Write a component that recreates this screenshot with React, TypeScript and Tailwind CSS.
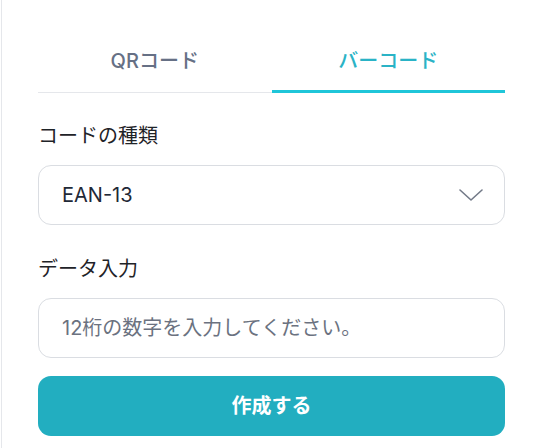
import { useState } from "react";

const font = { fontFamily: "Inter, 'Noto Sans CJK JP', sans-serif" };

export default function App() {
  const [tab, setTab] = useState<"qr" | "bar">("bar");

  return (
    <div className="min-h-screen bg-white pl-px" style={font}>
      <div className="min-h-screen border-l border-[#e5e7eb] px-[36px] pt-[30px]">
        <div className="grid grid-cols-2 border-b border-[#e5e7eb]">
          <button
            onClick={() => setTab("qr")}
            className={`-mb-px border-b-[3px] pt-[17px] pb-[15px] text-[20px] leading-[28px] font-medium ${
              tab === "qr" ? "border-[#1fc6d9] text-[#2ab3c6]" : "border-transparent text-[#667085]"
            }`}
          >
            QRコード
          </button>
          <button
            onClick={() => setTab("bar")}
            className={`-mb-px border-b-[3px] pt-[17px] pb-[15px] text-[20px] leading-[28px] font-medium ${
              tab === "bar" ? "border-[#1fc6d9] text-[#2ab3c6]" : "border-transparent text-[#667085]"
            }`}
          >
            バーコード
          </button>
        </div>

        <div className="pt-[28px]">
          <label className="mb-[14px] block text-[20px] leading-[30px] text-[#1f2328]">
            コードの種類
          </label>
          <div className="flex h-[60px] items-center justify-between rounded-[13px] border border-[#dadde2] pl-[23px] pr-[21px]">
            <span className="text-[20px] text-[#1f2937]">EAN-13</span>
            <svg width="24" height="12" viewBox="0 0 24 12" fill="none">
              <polyline
                points="1,1 12,11 23,1"
                stroke="#737a88"
                strokeWidth="1.6"
                strokeLinecap="round"
                strokeLinejoin="round"
              />
            </svg>
          </div>

          <label className="mt-[29px] mb-[14px] block text-[20px] leading-[30px] text-[#1f2328]">
            データ入力
          </label>
          <input
            type="text"
            placeholder="12桁の数字を入力してください。"
            className="h-[60px] w-full rounded-[13px] border border-[#dadde2] px-[23px] text-[20px] text-[#1f2937] outline-none placeholder:text-[#6b7280]"
          />

          <button className="mt-[18px] flex h-[60px] w-full items-center justify-center rounded-[13px] bg-[#22aec0] text-[20px] font-bold text-white">
            作成する
          </button>
        </div>
      </div>
    </div>
  );
}
